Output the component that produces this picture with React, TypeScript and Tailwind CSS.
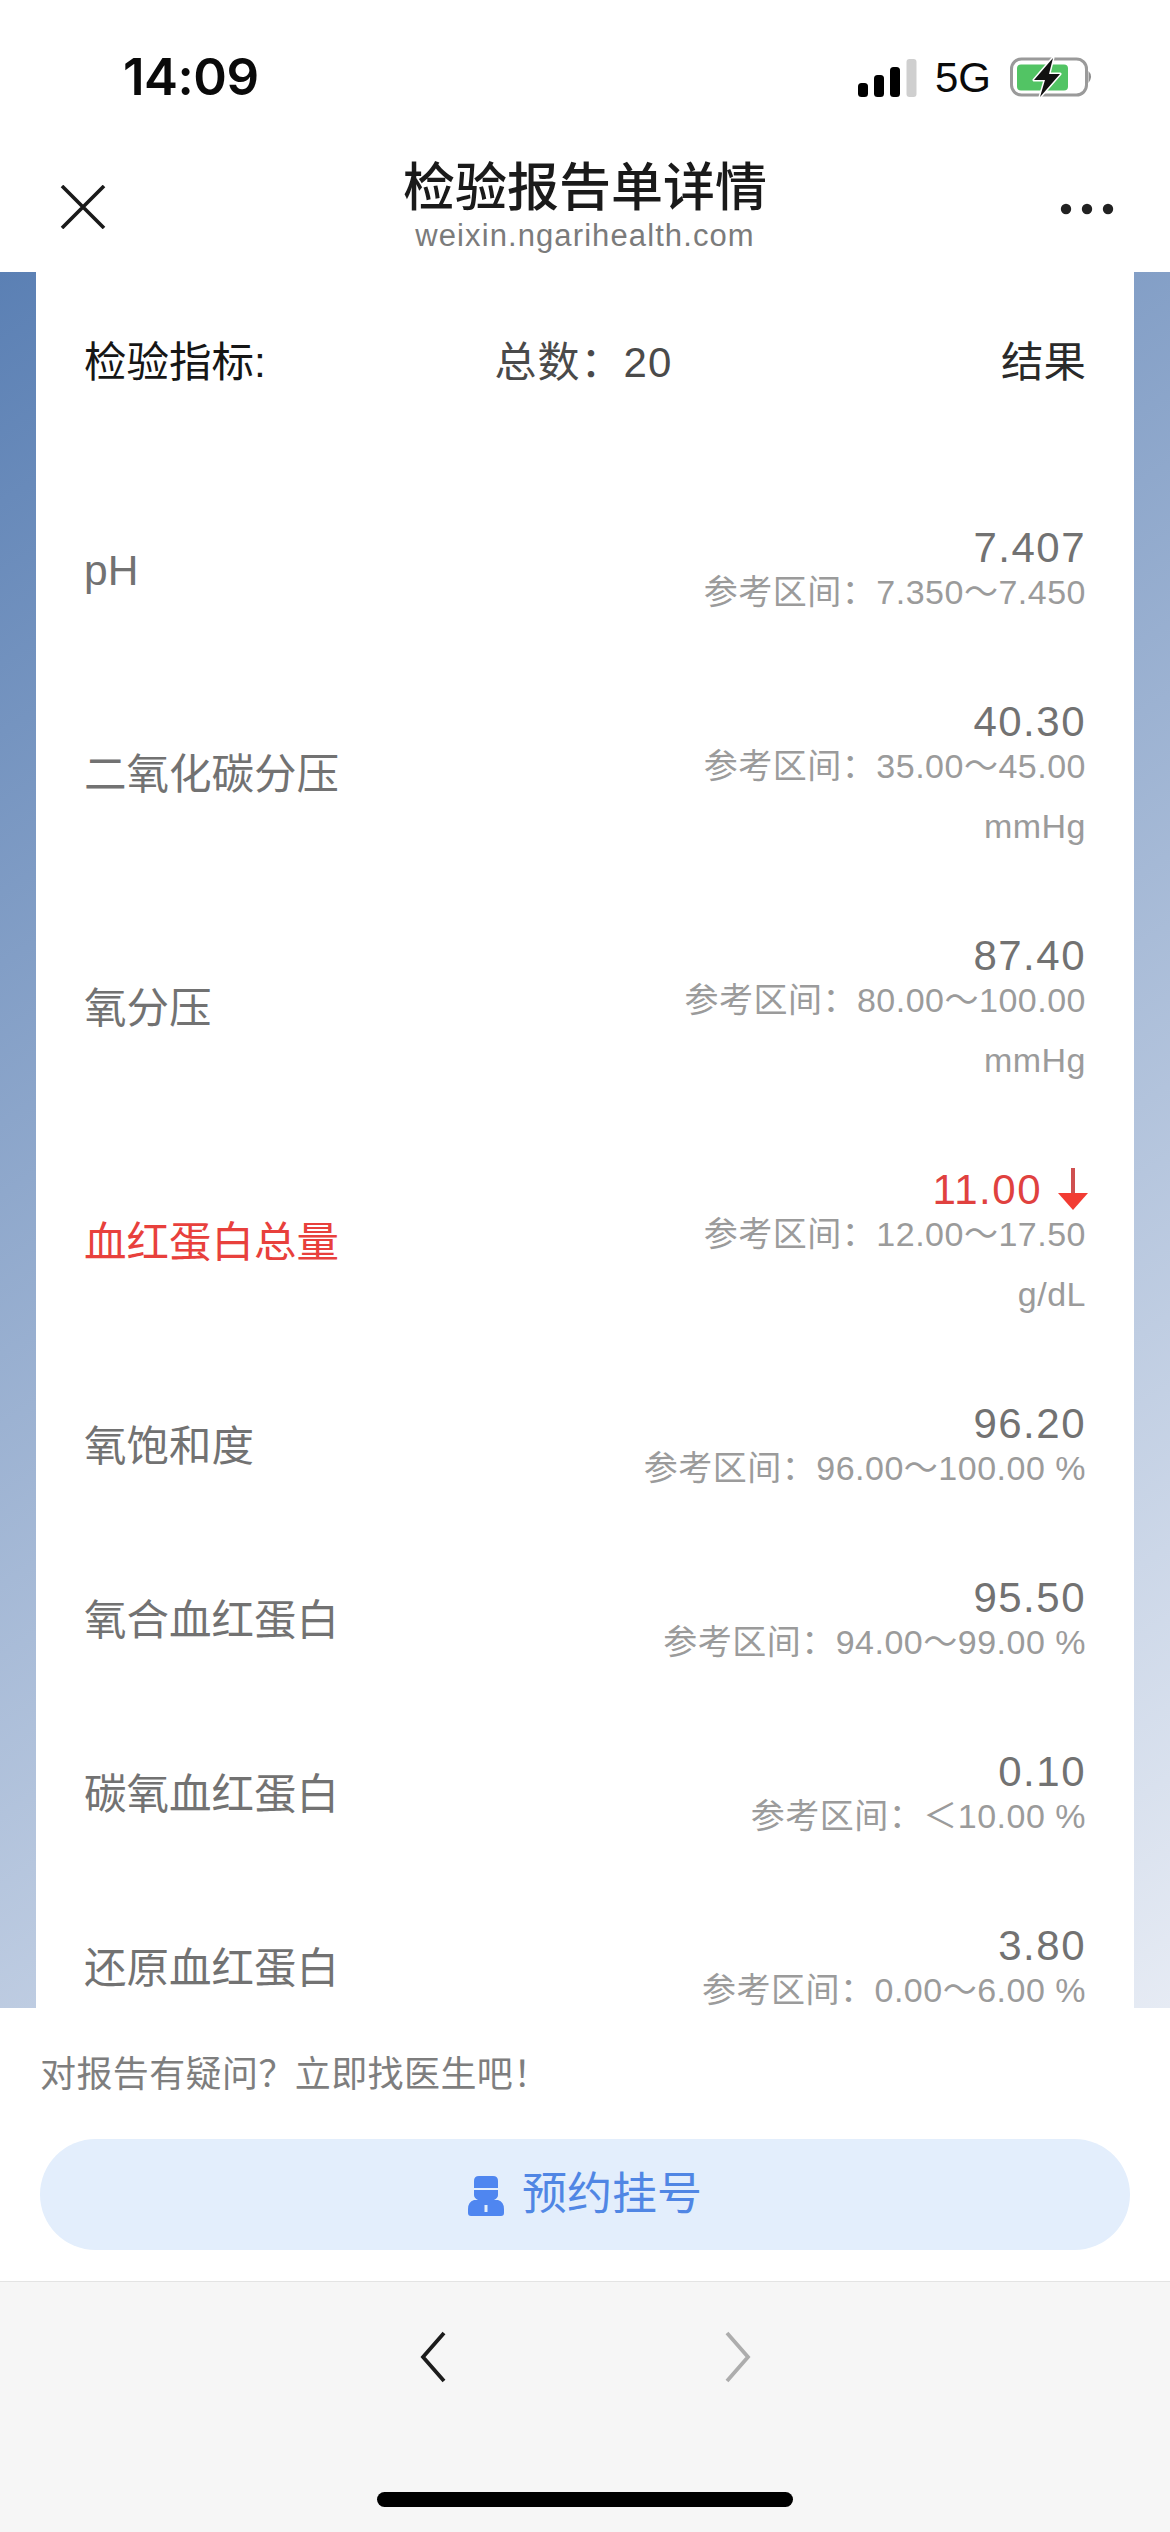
import React from "react";

type Row = { name: string; value: string; range: string; unit?: string; low?: boolean };

const rows: Row[] = [
  { name: "pH", value: "7.407", range: "参考区间\uFF1A7.350\uFF5E7.450" },
  { name: "二氧化碳分压", value: "40.30", range: "参考区间\uFF1A35.00\uFF5E45.00", unit: "mmHg" },
  { name: "氧分压", value: "87.40", range: "参考区间\uFF1A80.00\uFF5E100.00", unit: "mmHg" },
  { name: "血红蛋白总量", value: "11.00", range: "参考区间\uFF1A12.00\uFF5E17.50", unit: "g/dL", low: true },
  { name: "氧饱和度", value: "96.20", range: "参考区间\uFF1A96.00\uFF5E100.00 %" },
  { name: "氧合血红蛋白", value: "95.50", range: "参考区间\uFF1A94.00\uFF5E99.00 %" },
  { name: "碳氧血红蛋白", value: "0.10", range: "参考区间\uFF1A\uFF1C10.00 %" },
  { name: "还原血红蛋白", value: "3.80", range: "参考区间\uFF1A0.00\uFF5E6.00 %" },
];

function Battery() {
  return (
    <svg width="84" height="42" viewBox="0 0 84 42" className="ml-[19px]">
      <rect x="1.5" y="2" width="75" height="36" rx="10" fill="none" stroke="#9a9a9a" strokeWidth="3" />
      <rect x="7" y="7.5" width="51" height="26" rx="4" fill="#52c464" />
      <path d="M78.5 14 q5 5 0 12z" fill="#8f8f8f" />
      <path d="M43 1 L24 23 L35 23 L30 40 L50 17 L39 17 Z" fill="#111" stroke="#fff" strokeWidth="3" paintOrder="stroke" strokeLinejoin="round" />
    </svg>
  );
}

function Signal() {
  return (
    <svg width="60" height="38" viewBox="0 0 60 38">
      <rect x="0" y="24" width="10" height="14" rx="3.5" fill="#000" />
      <rect x="16" y="16" width="10" height="22" rx="3.5" fill="#000" />
      <rect x="32" y="8" width="10" height="30" rx="3.5" fill="#000" />
      <rect x="48.5" y="0" width="10" height="38" rx="3" fill="#cfcfcf" />
    </svg>
  );
}

function RowItem({ r }: { r: Row }) {
  return (
    <div className="flex items-center justify-between py-[42px]">
      <div className={`pb-3 text-[42.5px] leading-[52px] ${r.low ? "text-[#e8403c]" : "text-[#727272]"}`}>{r.name}</div>
      <div className="flex flex-col items-end">
        <div className={`flex items-center h-[30px] text-[42px] tracking-[1.5px] ${r.low ? "text-[#e0413f]" : "text-[#727272]"}`}>
          {r.value}
          {r.low && (
            <svg width="30" height="42" viewBox="0 0 30 42" className="ml-[16px] -mr-[2px]">
              <rect x="13" y="0" width="4" height="27" fill="#cf5050" />
              <path d="M0 25 H30 L15 42 Z" fill="#f23c33" />
            </svg>
          )}
        </div>
        <div className="h-[60px] leading-[60px] text-[34px] tracking-[0.5px] text-[#9b9b9b] whitespace-pre">{r.range}</div>
        {r.unit && <div className="h-[60px] leading-[60px] text-[34px] tracking-[0.5px] text-[#9b9b9b]">{r.unit}</div>}
      </div>
    </div>
  );
}

export default function App() {
  return (
    <div className="w-[1170px] h-[2532px] flex flex-col bg-white overflow-hidden font-['Liberation_Sans','Noto_Sans_CJK_SC',sans-serif]">
      <div className="h-[272px] flex flex-col shrink-0">
        <div className="h-[138px] pt-[54px] pl-[123px] pr-[76px] flex items-start justify-between">
          <div className="font-['Inter',sans-serif] font-semibold text-[51px] leading-[46px] text-[#0a0a0a] tracking-[-0.5px]">14:09</div>
          <div className="flex items-center pt-[3px]">
            <Signal />
            <span className="ml-[17px] text-[42px] leading-[38px] text-[#0a0a0a]">5G</span>
            <Battery />
          </div>
        </div>
        <div className="flex-1 relative flex flex-col items-center">
          <div className="text-[52px] leading-[60px] font-medium text-[#1a1a1a] mt-[20px]">检验报告单详情</div>
          <div className="text-[31px] leading-[36px] tracking-[1.1px] text-[#7b7b7b]">weixin.ngarihealth.com</div>
          <svg width="46" height="44" viewBox="0 0 46 44" className="absolute left-[60px] top-[47px]">
            <path d="M2 1 L44 43 M44 1 L2 43" stroke="#1a1a1a" strokeWidth="3.6" fill="none" />
          </svg>
          <svg width="54" height="12" viewBox="0 0 54 12" className="absolute left-[1060px] top-[65px]">
            <circle cx="6" cy="6" r="5.2" fill="#222" />
            <circle cx="27" cy="6" r="5.2" fill="#222" />
            <circle cx="48" cy="6" r="5.2" fill="#222" />
          </svg>
        </div>
      </div>

      <div className="h-[1736px] shrink-0 px-[36px] bg-[linear-gradient(148deg,#5b80b4,#e6ebf4)]">
        <div className="h-full bg-white overflow-hidden px-[48px]">
          <div className="h-[218px] pt-[70px] flex justify-between items-start text-[42.5px] leading-[42px]">
            <span className="text-[#161616]">检验指标:</span>
            <span className="text-[#4a4a4a] text-[42px] tracking-[1px] mr-[100px]">总数{"\uFF1A"}20</span>
            <span className="text-[#2a2a2a]">结果</span>
          </div>
          {rows.map((r) => (
            <RowItem key={r.name} r={r} />
          ))}
        </div>
      </div>

      <div className="h-[274px] shrink-0 px-[40px] border-b border-[#e4e4e4]">
        <div className="pt-[46px] text-[36px] leading-[42px] tracking-[0.4px] text-[#7e7e7e]">对报告有疑问{"\uFF1F"}立即找医生吧{"\uFF01"}</div>
        <div className="mt-[43px] h-[111px] rounded-full bg-[#e3eefc] flex items-center justify-center">
          <svg width="36" height="40" viewBox="0 0 36 40" className="mr-[18px] mt-[2px]">
            <path d="M6 12 V5 Q6 0 11 0 H25 Q30 0 30 5 V12 Z" fill="#4f86f0" />
            <path d="M6 14 H30 V19 Q30 22 26 24 H30 Q36 26 36 33 V37 Q36 40 33 40 H3 Q0 40 0 37 V33 Q0 26 6 24 H10 Q6 22 6 19 Z" fill="#4f86f0" />
            <rect x="16.5" y="29" width="3" height="7" fill="#e3eefc" />
          </svg>
          <span className="text-[45px] leading-[50px] text-[#5086e4]">预约挂号</span>
        </div>
      </div>

      <div className="flex-1 bg-[#f6f6f6] relative flex justify-center">
        <div className="flex gap-[279px] pt-[49px] h-fit">
          <svg width="26" height="52" viewBox="0 0 26 52">
            <path d="M24 2 L3 26 L24 50" stroke="#1c1c1c" strokeWidth="3.8" fill="none" />
          </svg>
          <svg width="26" height="52" viewBox="0 0 26 52">
            <path d="M2 2 L23 26 L2 50" stroke="#adadad" strokeWidth="3.8" fill="none" />
          </svg>
        </div>
        <div className="absolute left-[377px] top-[210px] w-[416px] h-[15px] rounded-full bg-black" />
      </div>
    </div>
  );
}
